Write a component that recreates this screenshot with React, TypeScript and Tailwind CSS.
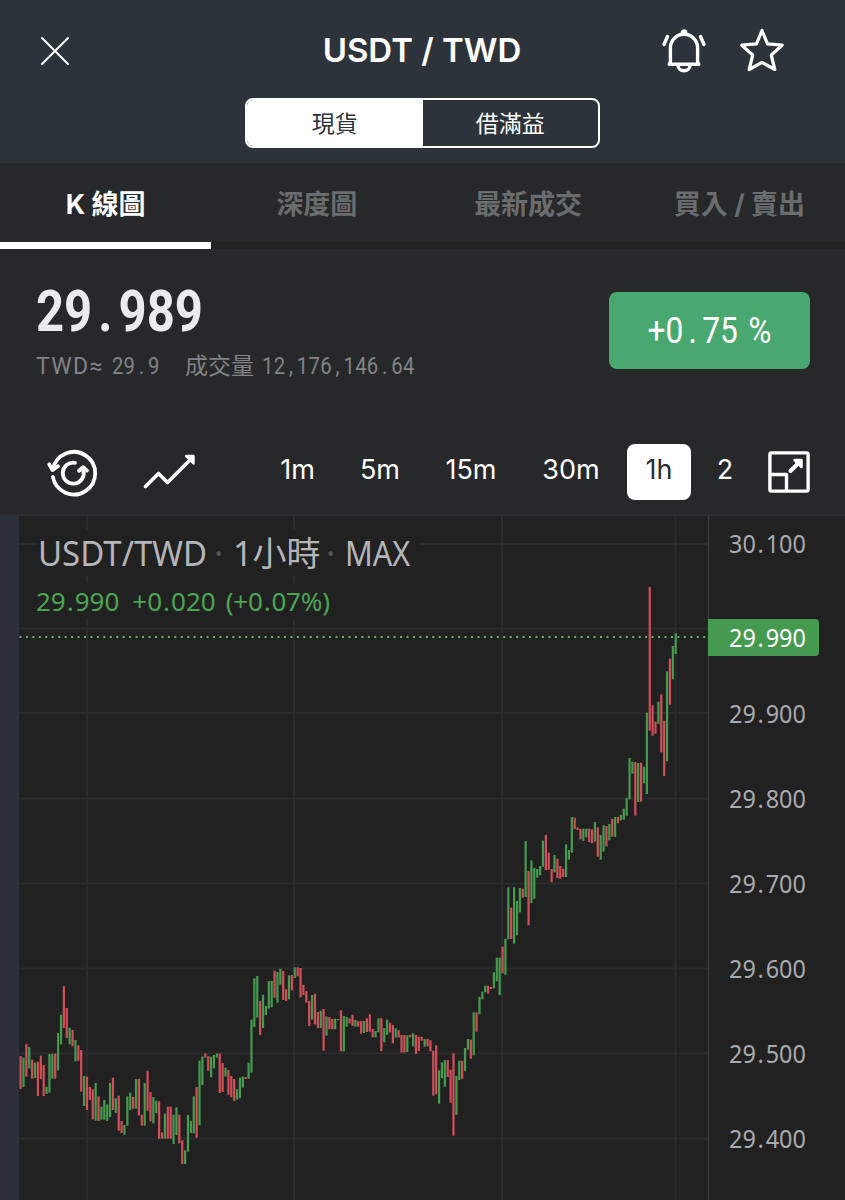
import React from "react";
import clsx from "clsx";

type Candle = ["g" | "r", number, number];

const tabs = ["K 線圖", "深度圖", "最新成交", "買入 / 賣出"];

const intervals = [
  { label: "1m", width: "w-[67px]" },
  { label: "5m", width: "w-[98px]" },
  { label: "15m", width: "w-[84px]" },
  { label: "30m", width: "w-[116px]" },
];

const priceLabels = ["30.100", "29.900", "29.800", "29.700", "29.600", "29.500", "29.400"];

const gridRows = [544, 628.5, 713, 798.5, 883.5, 968.5, 1053.5, 1138.5];
const gridCols = [87, 294, 502, 675.5];

// color, high, low
const candles: Candle[] = [
  ["r", 1056, 1089], ["g", 1057.7, 1087], ["r", 1044, 1076.7], ["g", 1047, 1068.3], ["r", 1059.7, 1078.7],
  ["g", 1062.7, 1078], ["r", 1061.7, 1096], ["r", 1055.7, 1079], ["r", 1065, 1096], ["g", 1086.7, 1094],
  ["g", 1054, 1092.7], ["g", 1053.7, 1078.7], ["r", 1053.7, 1078.7], ["g", 1033, 1070.3], ["g", 1014.7, 1044.3],
  ["r", 986.3, 1028], ["r", 1008, 1038], ["g", 1027.7, 1044.3], ["r", 1030, 1046.3], ["g", 1040, 1061.3],
  ["r", 1045.3, 1060.7], ["r", 1050, 1091.7], ["g", 1076, 1106], ["r", 1076.7, 1110], ["r", 1087, 1100],
  ["r", 1089.3, 1119.3], ["g", 1083, 1120.7], ["r", 1096.3, 1121], ["g", 1106.7, 1119.7], ["g", 1100, 1119.7],
  ["g", 1104.3, 1121], ["g", 1083, 1117], ["r", 1077.7, 1110], ["g", 1098.3, 1113], ["r", 1095.7, 1130.7],
  ["r", 1121, 1133], ["g", 1125, 1134.7], ["g", 1096.3, 1125.7], ["g", 1092.7, 1110.3], ["r", 1097, 1108.7],
  ["g", 1079, 1108.7], ["r", 1079, 1115.3], ["r", 1114.7, 1125.7], ["g", 1083, 1125.7], ["r", 1070.7, 1110.7],
  ["r", 1092, 1121.3], ["g", 1097, 1123.3], ["g", 1100.7, 1113], ["r", 1101.3, 1138.7], ["r", 1132.3, 1138.7],
  ["g", 1113.7, 1138.7], ["r", 1106.7, 1138.7], ["r", 1106.7, 1138.7], ["g", 1114.7, 1144], ["g", 1107.3, 1135],
  ["r", 1114.7, 1143.3], ["r", 1140.3, 1164], ["g", 1150.3, 1164], ["g", 1115, 1151.7], ["g", 1121, 1133],
  ["g", 1096.3, 1133.3], ["r", 1087, 1137.7], ["g", 1060.7, 1125.3], ["g", 1056.5, 1085], ["r", 1053.5, 1057.7],
  ["r", 1056.3, 1070.7], ["g", 1056.7, 1077.3], ["g", 1055, 1068.3], ["g", 1053.5, 1057.7], ["r", 1053.3, 1093],
  ["r", 1063, 1092], ["g", 1067.7, 1076.5], ["r", 1070, 1094.7], ["r", 1076, 1097.3], ["r", 1079, 1101],
  ["g", 1089.3, 1099.7], ["g", 1077.7, 1098.3], ["g", 1076.7, 1087.7], ["r", 1077, 1079], ["g", 1062.7, 1078.8],
  ["g", 1019.7, 1072.7], ["g", 978.3, 1027], ["g", 976, 1017.7], ["r", 1001, 1035], ["g", 994.7, 1028],
  ["g", 1006, 1015], ["g", 981, 1008.7], ["g", 981, 1007.3], ["r", 970.7, 997.7], ["g", 972, 1002.7],
  ["g", 968.7, 984.7], ["r", 971, 1000], ["r", 989.3, 1001], ["g", 975.3, 999.3], ["r", 975, 990.3],
  ["g", 967.3, 978], ["r", 967.3, 976.3], ["r", 968, 997.3], ["r", 985, 995], ["r", 991, 1002.7],
  ["r", 1001, 1026], ["g", 995, 1019.7], ["r", 993.7, 1024.3], ["r", 1012, 1028], ["g", 1010.7, 1028],
  ["r", 1009, 1050.7], ["g", 1016.3, 1035.7], ["r", 1017, 1029.3], ["r", 1018.7, 1029.3], ["g", 1018.7, 1029.3],
  ["g", 1019, 1020.2], ["r", 1010.3, 1051.3], ["g", 1016, 1051.3], ["g", 1017, 1026.7], ["r", 1018.3, 1023.3],
  ["r", 1014.7, 1026], ["g", 1020, 1026.7], ["r", 1021, 1026.7], ["r", 1021, 1033.7], ["g", 1021, 1033],
  ["r", 1018.3, 1032], ["r", 1014.3, 1031.7], ["r", 1028.8, 1037.3], ["g", 1031, 1037.3], ["g", 1018.3, 1032.3],
  ["r", 1018.3, 1051], ["g", 1028, 1042.3], ["g", 1019.7, 1034.7], ["r", 1022.7, 1032.5], ["r", 1025, 1043.3],
  ["g", 1028.3, 1037.5], ["r", 1030.3, 1037.5], ["r", 1035, 1052.5], ["r", 1035, 1052.5], ["g", 1035.3, 1052],
  ["r", 1034.7, 1037.3], ["g", 1033.3, 1046.3], ["r", 1035, 1054], ["r", 1036.7, 1051], ["r", 1036.7, 1040.7],
  ["g", 1039, 1046.7], ["r", 1039, 1046.3], ["r", 1040.3, 1051.3], ["r", 1050.7, 1095.7], ["r", 1045.3, 1094.3],
  ["g", 1070.3, 1103.7], ["g", 1062.3, 1078.3], ["g", 1060, 1086.7], ["r", 1060, 1077], ["r", 1069.7, 1102.7],
  ["r", 1053.3, 1135.7], ["g", 1076, 1114.7], ["g", 1060.7, 1080], ["r", 1060.7, 1079], ["g", 1048, 1071],
  ["g", 1039, 1049.7], ["r", 1039.7, 1058.7], ["g", 1012.3, 1055.3], ["r", 1012.3, 1031.7], ["g", 997, 1014.3],
  ["g", 991.7, 999.3], ["g", 985.7, 992.3], ["r", 985.7, 993.7], ["r", 987, 989], ["g", 972.3, 988.3],
  ["g", 957.7, 981.3], ["g", 957.7, 995], ["r", 946.7, 973.3], ["g", 938.7, 974.7], ["g", 887.3, 939.3],
  ["r", 907.7, 939], ["g", 887.3, 943.7], ["g", 901, 935.3], ["g", 888, 912.3], ["r", 888.7, 897.7],
  ["g", 841, 897], ["r", 871, 925.3], ["g", 860.3, 903], ["g", 868, 898.7], ["g", 869, 877.7],
  ["g", 866, 875.3], ["g", 840.7, 866.7], ["r", 835, 870.3], ["r", 852.7, 869.7], ["r", 869, 882.3],
  ["g", 855, 872.3], ["r", 858.7, 878], ["r", 866, 878.7], ["r", 868.7, 877], ["g", 844.3, 877],
  ["g", 850, 859.7], ["g", 817, 852.7], ["r", 817.7, 829], ["r", 827.3, 830], ["r", 828.7, 839.3],
  ["g", 828.7, 841], ["g", 828.7, 837.3], ["r", 828.7, 842], ["r", 829.3, 843.3], ["g", 822, 841.7],
  ["r", 827.3, 856.7], ["g", 835, 859.7], ["g", 825.3, 851.7], ["r", 826, 846.3], ["g", 824, 840.3],
  ["r", 819, 836.7], ["g", 817, 837], ["r", 817, 823.3], ["g", 814.7, 820.3], ["g", 808.7, 819.7],
  ["g", 798, 815.7], ["g", 758, 799.3], ["g", 761.7, 773.7], ["r", 762, 815.7], ["g", 763, 802],
  ["r", 762.7, 801.7], ["g", 766.7, 783.3], ["g", 712.7, 794], ["r", 587, 730.7], ["r", 705.3, 735.7],
  ["r", 721.7, 733.7], ["g", 701.7, 724], ["r", 694.3, 752.3], ["r", 720.7, 776], ["g", 671.3, 761.3],
  ["r", 658.7, 704.7], ["g", 646, 679.3], ["g", 633, 654],
];

// gives the decimal point and commas a width of their own
const Digits = ({ value, point }: { value: string; point: string }) => (
  <>
    {value.split(/([.,])/).map((part, index) =>
      part === "." || part === "," ? (
        <span key={index} className={point}>
          {part}
        </span>
      ) : (
        part
      )
    )}
  </>
);

const BellIcon = () => (
  <svg width="46" height="46" viewBox="0 0 46 46" fill="none" stroke="#fff" strokeWidth="3.4" strokeLinecap="round" strokeLinejoin="round">
    <path d="M9.400 34.500V19.800a13.600 13.600 0 0 1 27.200 0V34.500L37.800 36.300H8.200Z" />
    <path d="M21.300 4.500a1.700 1.500 0 0 1 3.400 0z" />
    <path d="M17 37.500a6 5.300 0 0 0 12 0" />
    <path d="M6.500 8.500L3 16.500" />
    <path d="M39.500 8.500L43 16.500" />
  </svg>
);

const StarIcon = () => (
  <svg width="46" height="46" viewBox="0 0 46 46" fill="none" stroke="#fff" strokeWidth="3.2" strokeLinejoin="round">
    <path d="M23 2.500L28.500 15.800L43.200 17.200L32.300 27L35.800 41.500L23 34.300L10.200 41.500L13.700 27L2.800 17.200L17.500 15.800Z" />
  </svg>
);

const RefreshIcon = () => (
  <svg width="52" height="48" viewBox="0 0 52 48" className="overflow-visible" fill="none" stroke="#fff" strokeWidth="3.8" strokeLinecap="round" strokeLinejoin="round">
    <path d="M6 21A21.300 21.300 0 1 1 5.900 28.800" />
    <path d="M2.200 16.300L5.500 22L11 18.200" />
    <path d="M28 14.800A10.500 10.500 0 1 0 36.400 22.500" />
    <path d="M32 22.800L36.200 19.200L40 22.600" />
  </svg>
);

const TrendIcon = () => (
  <svg width="54" height="38" viewBox="0 0 54 38" fill="none" stroke="#fff" strokeWidth="3.6" strokeLinecap="round" strokeLinejoin="round">
    <path d="M2.500 33.500L15.500 20.500L24.500 29.500L47.500 6.500" />
    <path d="M43 3H50.500V10.500Z" fill="#fff" strokeWidth="2.400" />
  </svg>
);

const ExpandIcon = () => (
  <svg width="42" height="42" viewBox="0 0 42 42" fill="none" stroke="#fff" strokeWidth="3.4" strokeLinejoin="round">
    <rect x="1.900" y="1.900" width="38.200" height="38.200" rx="1.500" />
    <path d="M2 23.500H18.500V40" />
    <path d="M22.500 20L31 11.500" strokeWidth="4" strokeLinecap="round" />
    <path d="M26.500 9H33.500V16Z" fill="#fff" strokeWidth="2.500" />
  </svg>
);

const Chart = () => (
  <svg width="710" height="684" viewBox="0 516 710 684" className="block">
    {gridRows.map((y) => (
      <line key={y} x1="19" x2="708" y1={y} y2={y} stroke="#2b2b2c" strokeWidth="2" />
    ))}
    {gridCols.map((x) => (
      <line key={x} x1={x} x2={x} y1="516" y2="1200" stroke="#2b2b2c" strokeWidth="2" />
    ))}
    <line x1="708.500" x2="708.500" y1="516" y2="1200" stroke="#39393b" strokeWidth="1.500" />
    <line x1="19.500" x2="707" y1="637" y2="637" stroke="#6fae72" strokeWidth="1.800" strokeDasharray="2 4.450" />
    {candles.map(([color, high, low], index) => (
      <rect
        key={index}
        x={19.5 + index * 2.886}
        y={high}
        width="2.2"
        height={low - high}
        fill={color === "g" ? "#469b4e" : "#d1505a"}
      />
    ))}
  </svg>
);

const App = () => {
  return (
    <main className="flex h-[1200px] w-[845px] flex-col overflow-hidden bg-[#27282a] font-['Inter','Noto_Sans_CJK_TC',sans-serif] text-white">
      {/* Header */}
      <header className="h-[163px] shrink-0 bg-[#2d333b]">
        <div className="grid h-[98px] grid-cols-[245px_354px_246px] items-center pt-[3px]">
          <div className="pl-[40px]">
            <svg width="30" height="30" viewBox="0 0 30 30" stroke="#fff" strokeWidth="2" strokeLinecap="round">
              <path d="M2 2L28 28M28 2L2 28" />
            </svg>
          </div>
          <h1 className="text-center text-[33px] leading-none font-semibold whitespace-nowrap">USDT / TWD</h1>
          <div className="flex gap-8 pl-[62px]">
            <BellIcon />
            <StarIcon />
          </div>
        </div>
        <div className="mx-auto grid h-[50px] w-[355px] grid-cols-2 overflow-hidden rounded-lg border-2 border-white text-[23px] leading-[48px]">
          <div className="bg-white text-center text-[#2d333b]">現貨</div>
          <div className="text-center">借滿益</div>
        </div>
      </header>

      {/* Tabs */}
      <nav className="grid h-[86px] shrink-0 grid-cols-4 text-center text-[27px] font-bold">
        {tabs.map((tab, index) => (
          <div
            key={tab}
            className={clsx(
              "h-[86px] border-b-[7px] leading-[83px] whitespace-nowrap",
              index === 0 ? "border-white text-white" : "border-[#222223] text-[#6b6c6e]"
            )}
          >
            {tab}
          </div>
        ))}
      </nav>

      {/* Price */}
      <section className="flex h-[179px] shrink-0 justify-between pt-[43px] pr-[35px] pl-[36px]">
        <div className="font-['Roboto','Noto_Sans_CJK_TC',sans-serif]">
          <div className="h-[52px] w-[240px] origin-left scale-x-[0.860] text-[57px] leading-[39px] font-bold whitespace-nowrap text-[#ebebed]">
            <Digits value="29.989" point="mx-[7px]" />
          </div>
          <div className="mt-[8px] flex text-[23px] leading-[30px] whitespace-nowrap text-[#828385]">
            <span className="w-[76px] tracking-[1.4px]">TWD≈</span>
            <span className="w-[73px]">
              <span className="inline-block origin-left scale-x-[0.88]">
                <Digits value="29.9" point="mx-[4.5px]" />
              </span>
            </span>
            <span className="w-[77px]">成交量</span>
            <span className="inline-block origin-left scale-x-[0.88] tracking-[0.4px]">
              <Digits value="12,176,146.64" point="mx-[4px]" />
            </span>
          </div>
        </div>
        <div className="h-[77px] w-[201px] rounded-lg bg-[#48a870] text-center font-['Roboto',sans-serif] text-[36px] leading-[79px]">
          <span className="inline-block scale-x-[0.88] whitespace-nowrap">
            <Digits value="+0.75" point="mx-[6px]" />
            <span className="ml-[3px]"> %</span>
          </span>
        </div>
      </section>

      {/* Toolbar */}
      <div className="flex h-[86px] shrink-0 items-center pt-[1px] text-[27px]">
        <div className="ml-[47px] w-[96px]">
          <RefreshIcon />
        </div>
        <div className="w-[121px]">
          <TrendIcon />
        </div>
        {intervals.map(({ label, width }) => (
          <div key={label} className={clsx("-mt-[2px] text-center", width)}>
            {label}
          </div>
        ))}
        <div className="-ml-[2px] h-[56px] w-[64px] rounded-lg bg-white text-center leading-[52px] text-[#2a2b2d]">1h</div>
        <div className="-mt-[2px] w-[68px] text-center">2</div>
        <div className="ml-[9px]">
          <ExpandIcon />
        </div>
      </div>

      {/* Chart */}
      <section className="relative flex h-[686px] shrink-0 border-t-2 border-[#2c2c31] font-['Noto_Sans','Noto_Sans_CJK_TC',sans-serif]">
        <div className="relative w-[710px] bg-[linear-gradient(to_right,#2b303b_0_19px,#212122_19px)]">
          <Chart />
          <div className="absolute top-[14px] left-[38px] flex h-[46px] w-[382px] items-center bg-[#212122] text-[34px] leading-[46px] whitespace-nowrap text-[#b4b5b9]">
            <span className="w-[176px]">
              <span className="inline-block origin-left scale-x-[0.97]">USDT/TWD</span>
            </span>
            <span className="w-[19px] text-[#555]">·</span>
            <span className="w-[93px]">1小時</span>
            <span className="w-[19px] text-[#555]">·</span>
            <span className="inline-block origin-left scale-x-[0.9]">MAX</span>
          </div>
          <div className="absolute top-[67px] left-[36px] h-[36px] w-[300px] bg-[#212122] text-[26px] leading-[36px] whitespace-nowrap text-[#4ba553]">
            <Digits value="29.990" point="mx-[1px]" />
            <span className="ml-[13px]">
              <Digits value="+0.020" point="mx-[1px]" />
            </span>
            <span className="ml-[10px] tracking-[-0.2px]">
              <Digits value="(+0.07%)" point="mx-[1px]" />
            </span>
          </div>
        </div>
        <div className="w-[135px] bg-[#212122] text-[26px] text-[#a9aaae]">
          {priceLabels.map((label, index) => (
            <div
              key={label}
              className={clsx("h-[85px] pl-[19px] leading-[54px]", index === 1 && "mt-[85px]")}
            >
              <span className="inline-block origin-left scale-x-[0.9]">
                <Digits value={label} point="mx-[2px]" />
              </span>
            </div>
          ))}
        </div>
        <div className="absolute top-[103px] left-[708px] h-[37px] w-[111px] rounded-r bg-[#469a4f] pl-[21px] text-[26px] leading-[37px] text-white">
          <span className="inline-block origin-left scale-x-[0.9]">
            <Digits value="29.990" point="mx-[2px]" />
          </span>
        </div>
      </section>
    </main>
  );
};

export default App;
